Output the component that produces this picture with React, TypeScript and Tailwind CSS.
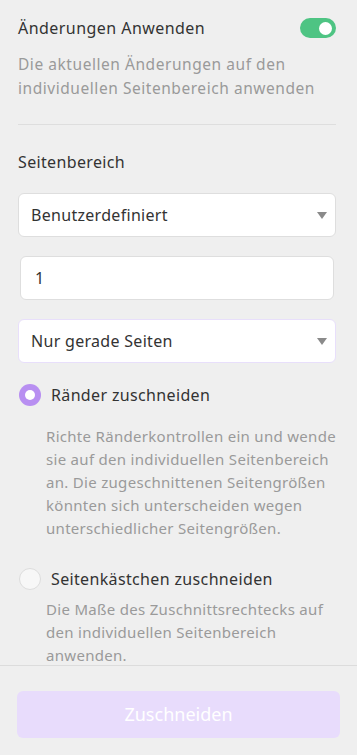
import { useState } from "react";

const font = { fontFamily: "'Noto Sans', 'Open Sans', sans-serif" };

function Caret() {
  return (
    <svg width="10" height="7" viewBox="0 0 10 7" className="shrink-0">
      <path d="M0 0h10L5 7z" fill="#8a8a8a" />
    </svg>
  );
}

function Select({ value, accent }: { value: string; accent?: boolean }) {
  return (
    <div
      className={`flex h-[44px] items-center justify-between rounded-md border bg-white pl-[12px] pr-[8px] text-[16px] tracking-[0.3px] text-[#333] ${
        accent ? "border-[#e8dffb]" : "border-[#dedede]"
      }`}
    >
      <span>{value}</span>
      <Caret />
    </div>
  );
}

function Radio({ checked, label }: { checked: boolean; label: string }) {
  return (
    <div className="flex items-center gap-[10px]">
      {checked ? (
        <span className="flex h-[22px] w-[22px] items-center justify-center rounded-full bg-[#b88ff1]">
          <span className="h-[10px] w-[10px] rounded-full bg-white" />
        </span>
      ) : (
        <span className="h-[22px] w-[22px] rounded-full border border-[#dddddd] bg-[#f7f7f7]" />
      )}
      <span className="text-[16px] leading-6 tracking-[0.35px] text-[#333]">{label}</span>
    </div>
  );
}

const descClass =
  "pl-[28px] whitespace-nowrap text-[15px] leading-[23px] tracking-[0.3px] text-[#9a9a9a]";

export default function App() {
  const [apply, setApply] = useState(true);

  return (
    <div className="flex h-[755px] w-[357px] flex-col bg-[#efefef]" style={font}>
      <div className="flex-1 overflow-hidden pl-[18px] pr-[21px] pt-4">
        <div className="flex items-center justify-between">
          <span className="text-[16px] leading-6 tracking-[0.45px] text-[#333]">
            Änderungen Anwenden
          </span>
          <button
            type="button"
            onClick={() => setApply((a) => !a)}
            className={`flex h-[20px] w-[36px] items-center rounded-full px-[4px] ${
              apply ? "justify-end bg-[#4ec483]" : "justify-start bg-[#cccccc]"
            }`}
          >
            <span className="h-[13px] w-[13px] rounded-full bg-white" />
          </button>
        </div>
        <p className="mt-3 text-[15.5px] leading-6 tracking-[0.55px] text-[#9a9a9a]">
          Die aktuellen Änderungen auf den individuellen Seitenbereich anwenden
        </p>
        <div className="mt-6 h-px bg-[#dedede]" />

        <div className="mt-[25px] text-[16px] leading-6 tracking-[0.35px] text-[#333]">
          Seitenbereich
        </div>
        <div className="mt-[19px] flex flex-col gap-[19px]">
          <Select value="Benutzerdefiniert" />
          <div className="mx-[2px] flex h-[44px] items-center rounded-md border border-[#dedede] bg-white px-[14px] text-[16px] text-[#333]">
            1
          </div>
          <Select value="Nur gerade Seiten" accent />
        </div>

        <div className="mt-[20px] pl-px">
          <Radio checked label="Ränder zuschneiden" />
        </div>
        <p className={`mt-[18px] ${descClass}`}>
          Richte Ränderkontrollen ein und wende
          <br />
          sie auf den individuellen Seitenbereich
          <br />
          an. Die zugeschnittenen Seitengrößen
          <br />
          könnten sich unterscheiden wegen
          <br />
          unterschiedlicher Seitengrößen.
        </p>

        <div className="mt-[27px] pl-px">
          <Radio checked={false} label="Seitenkästchen zuschneiden" />
        </div>
        <p className={`mt-[7px] ${descClass} leading-[22.5px]`}>
          Die Maße des Zuschnittsrechtecks auf
          <br />
          den individuellen Seitenbereich
          <br />
          anwenden.
        </p>
      </div>

      <div className="h-[90px] shrink-0 border-t border-[#dcdcdc] px-[17px] pt-[25px]">
        <button
          type="button"
          className="flex h-[47px] w-full items-center justify-center rounded-md bg-[#e8dcfc] text-[18px] text-white"
        >
          Zuschneiden
        </button>
      </div>
    </div>
  );
}
